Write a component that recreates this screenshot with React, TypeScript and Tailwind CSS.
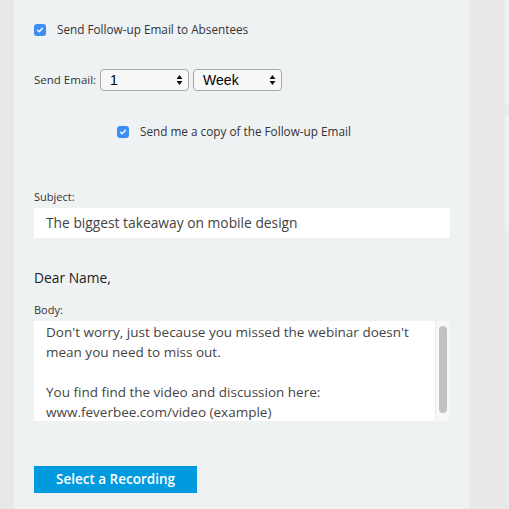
import React from 'react'

// Small blue tick box used by the two option rows
const Tick: React.FC = () => (
	<span className="w-3 h-3 rounded-[3px] bg-[#3c8ef4] flex items-center justify-center shrink-0">
		<svg width="8" height="8" viewBox="0 0 8 8" fill="none">
			<path d="M1.6 4.2 L3.2 5.8 L6.4 2.2" stroke="#fff" strokeWidth="1.4" strokeLinecap="round" strokeLinejoin="round" />
		</svg>
	</span>
)

// Fake select box with the stacked up/down arrows
const Picker: React.FC<{ value: string }> = ({ value }) => (
	<div className="w-[89px] h-[22px] rounded-[4px] border border-[#a9a9a9] bg-[#f8f8f8] flex items-center justify-between pl-[9px] pr-[5px]">
		<span className="text-[14px] text-black font-['Liberation_Sans',sans-serif] leading-none">{value}</span>
		<svg width="7" height="12" viewBox="0 0 7 12">
			<path d="M3.5 1 L6.5 5 L0.5 5 Z" fill="#111" />
			<path d="M3.5 11 L6.5 7 L0.5 7 Z" fill="#111" />
		</svg>
	</div>
)

const App: React.FC = () => {
	//Template
	return (
		<div className="w-[509px] h-[509px] bg-[#e9e9e9] flex font-['Open_Sans',sans-serif] text-[#333]">
			<div className="w-[14px] bg-[#e8e8e8]" />

			<div className="w-[456px] bg-[#eff2f3] px-5 pt-6 flex flex-col">
				{/* follow-up toggle */}
				<div className="flex items-center h-3">
					<Tick />
					<span className="ml-[11px] text-[11.75px] leading-none">Send Follow-up Email to Absentees</span>
				</div>

				{/* delay pickers */}
				<div className="mt-[33px] flex items-center h-[22px]">
					<span className="text-[11.5px] mr-1">Send Email:</span>
					<Picker value="1" />
					<div className="w-1" />
					<Picker value="Week" />
				</div>

				{/* copy to self */}
				<div className="mt-[35px] ml-[83px] flex items-center h-3">
					<Tick />
					<span className="ml-[11px] text-[11.75px] leading-none">Send me a copy of the Follow-up Email</span>
				</div>

				<div className="mt-[52px] text-[11px] leading-[14px]">Subject:</div>
				<div className="mt-1 w-[416px] h-[30px] bg-white flex items-center px-3 text-[13.8px] text-[#444]">
					The biggest takeaway on mobile design
				</div>

				<div className="mt-[31px] text-[13.8px] leading-[18px] text-[#222]">Dear Name,</div>

				<div className="mt-4 text-[11px] leading-[14px]">Body:</div>
				<div className="mt-1 w-[415px] h-[100px] bg-white flex overflow-hidden">
					<div className="flex-1 pl-3 pr-2 pt-px text-[13.5px] leading-[20px] text-[#444]">
						<p>Don't worry, just because you missed the webinar doesn't mean you need to miss out.</p>
						<p className="mt-5">You find find the video and discussion here: www.feverbee.com/video (example)</p>
					</div>
					<div className="w-[14px] bg-[#f7f7f7] border-l border-[#ececec] flex justify-center pt-[5px]">
						<div className="w-2 h-[87px] rounded-full bg-[#c1c1c1]" />
					</div>
				</div>

				<button className="mt-[45px] w-[163px] h-[27px] bg-[#009ade] text-white text-[13.5px] font-semibold">
					Select a Recording
				</button>
			</div>

			<div className="flex-1 flex justify-end">
				<div className="w-1 flex flex-col">
					<div className="h-[105px] bg-[#eff2f3]" />
					<div className="h-[10px]" />
					<div className="h-[116px] bg-[#eff2f3]" />
				</div>
			</div>
		</div>
	)
}

export default App
